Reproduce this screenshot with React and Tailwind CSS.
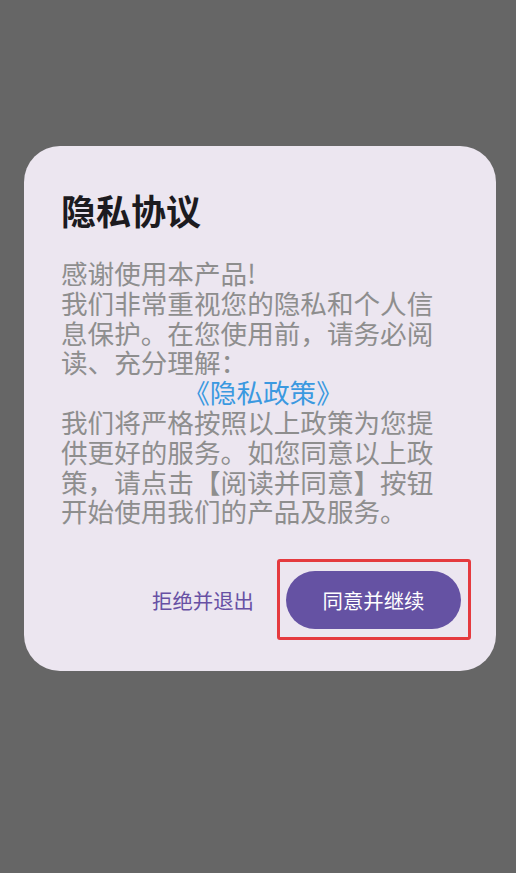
import React from "react";

const font = { fontFamily: '"Noto Sans CJK SC", "Noto Sans", sans-serif' };

export default function App() {
  return (
    <div
      className="w-[516px] h-[873px] bg-[#666666] flex items-start justify-start pt-[146px] pl-[24px]"
      style={font}
    >
      <div className="w-[472px] h-[525px] bg-[#ECE6F0] rounded-[36px] pl-[37px] pr-[35px] pt-[42px] flex flex-col">
        <h1 className="text-[35px] leading-[44px] font-bold text-[#1c1b1f]">
          隐私协议
        </h1>
        <div className="mt-[26px] text-[26.6px] leading-[29.8px] font-normal text-[#8e8e8e]">
          <div>感谢使用本产品!</div>
          <div>我们非常重视您的隐私和个人信</div>
          <div>息保护。在您使用前，请务必阅</div>
          <div>读、充分理解：</div>
          <div className="text-center pl-[4px] text-[#3b99e0]">《隐私政策》</div>
          <div>我们将严格按照以上政策为您提</div>
          <div>供更好的服务。如您同意以上政</div>
          <div>策，请点击【阅读并同意】按钮</div>
          <div>开始使用我们的产品及服务。</div>
        </div>
        <div className="mt-auto mb-[42px] flex items-center justify-end">
          <button className="text-[20.4px] leading-[28px] text-[#6750A4] mr-[32px]">
            拒绝并退出
          </button>
          <div className="relative">
            <button className="w-[175px] h-[58px] rounded-full bg-[#6552A3] text-white text-[20.4px] leading-[28px]">
              同意并继续
            </button>
            <div className="absolute left-[-9px] right-[-10px] top-[-12px] bottom-[-11px] border-[3px] border-[#e53a3f] rounded-[3px] pointer-events-none" />
          </div>
        </div>
      </div>
    </div>
  );
}
